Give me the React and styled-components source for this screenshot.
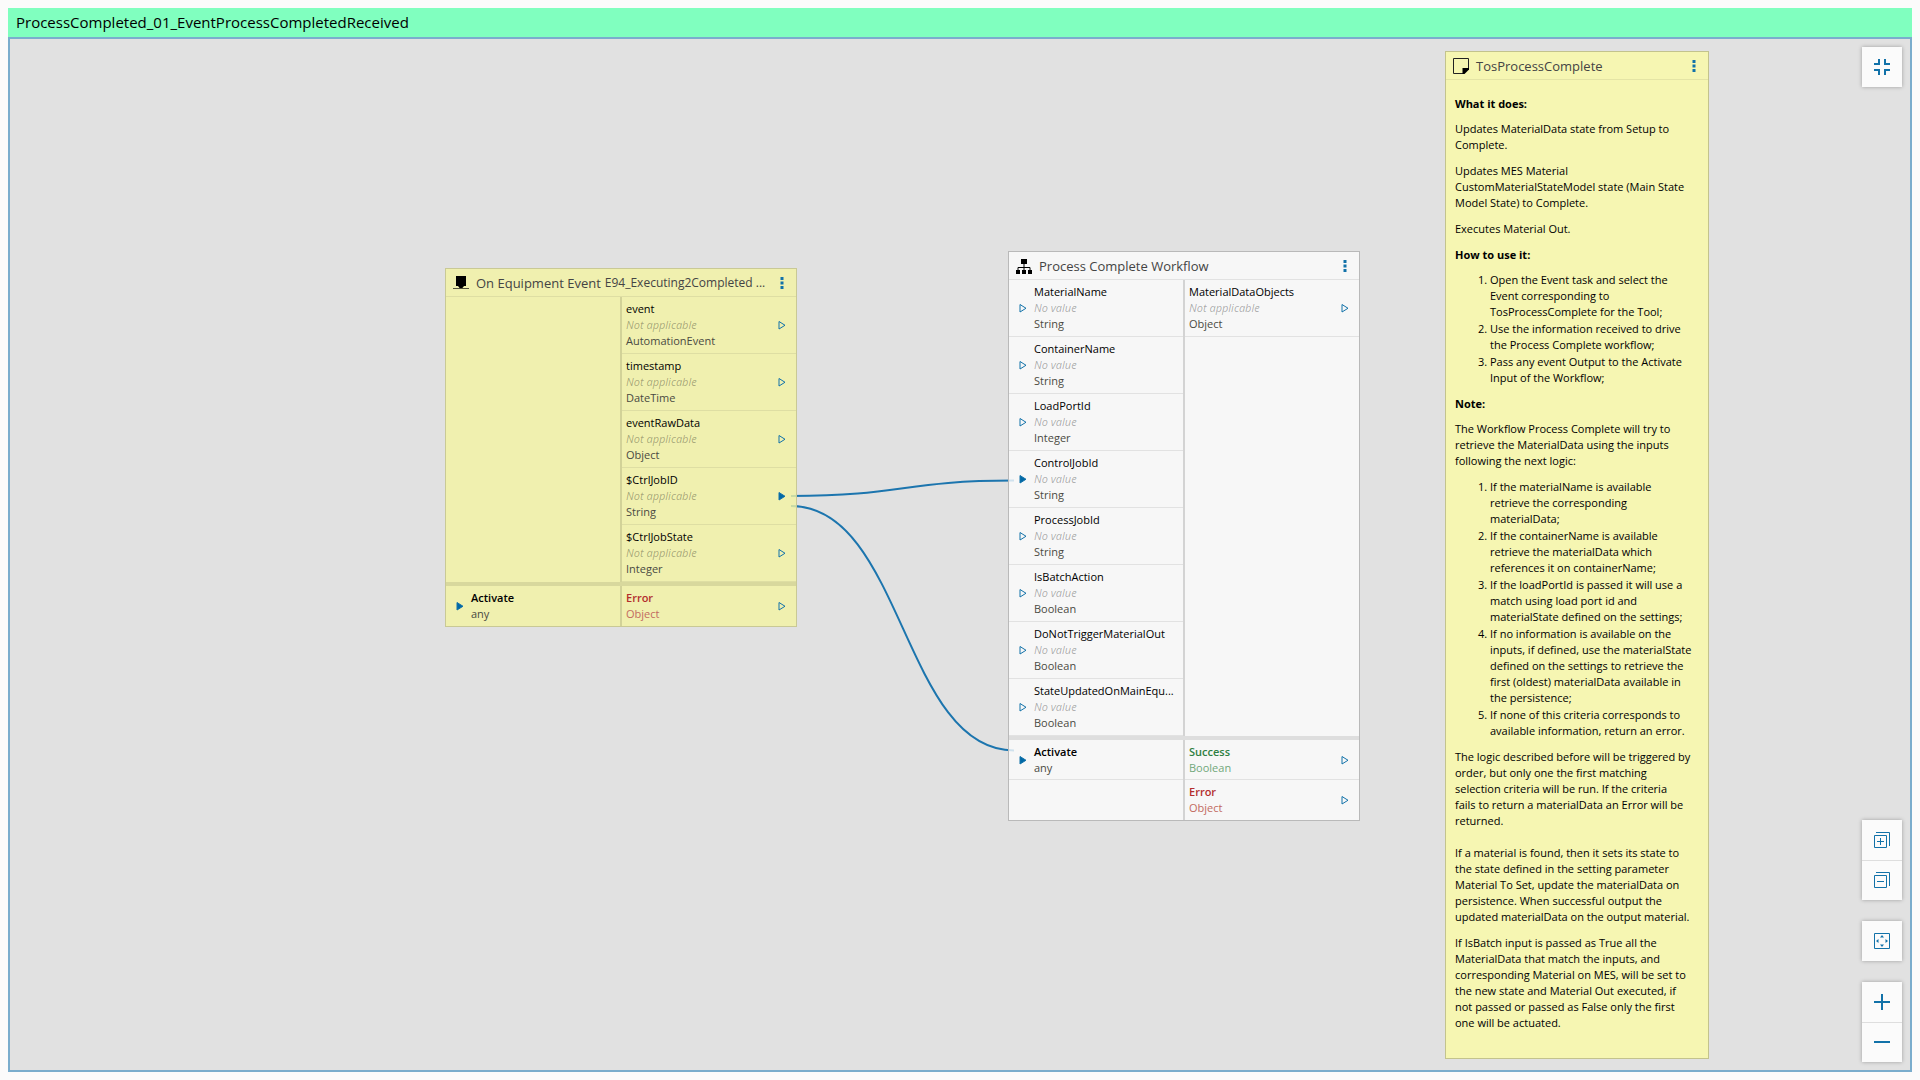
import React from "react";
import styled, { createGlobalStyle, css } from "styled-components";

const GlobalStyle = createGlobalStyle`
  *, *::before, *::after { box-sizing: border-box; }
  body {
    margin: 0;
    background: #fbfbfb;
    color: #000;
    font-family: "Open Sans", "Noto Sans", sans-serif;
    font-size: 11px;
    line-height: 16px;
  }
`;

const Page = styled.main`
  display: flex;
  flex-direction: column;
  min-height: 100vh;
  padding: 8px;
`;

const TitleBar = styled.header`
  height: 29px;
  padding: 0 8px;
  background: #80ffbf;
`;

const Title = styled.h1`
  margin: 0;
  font-size: 15px;
  font-weight: 400;
  line-height: 28px;
`;

const Canvas = styled.section`
  position: relative;
  flex: 1;
  overflow: hidden;
  border: 2px solid #7aadcd;
  background: #e1e1e1;
`;

const Wires = styled.svg`
  position: absolute;
  inset: 0;
  width: 100%;
  height: 100%;
  fill: none;
  stroke: #1c75ae;
  stroke-width: 2;
`;

const themes = {
  event: css`
    --surface: rgba(244, 244, 163, 0.8);
    --edge: #c9c995;
    --line: #dedea3;
    --divider: #d2d298;
    --band: #d8d89d;
  `,
  plain: css`
    --surface: rgba(252, 252, 252, 0.8);
    --edge: #b9b9b9;
    --line: #e2e2e2;
    --divider: #d3d3d3;
    --band: #dedede;
  `,
  note: css`
    --surface: #f6f6b2;
    --edge: #c3c38d;
    --line: #e4e4a5;
  `,
};

const Card = styled.article`
  ${(p) => themes[p.$theme]}
  position: absolute;
  left: ${(p) => p.$x}px;
  top: ${(p) => p.$y}px;
  width: ${(p) => p.$width}px;
  border: 1px solid var(--edge);
  background: var(--surface);
`;

const CardHeader = styled.header`
  display: flex;
  align-items: center;
  height: 28px;
  padding: 0 10px 0 7px;
  border-bottom: 1px solid var(--line);
  color: #444;
  font-size: 12px;
  svg { flex: none; }
`;

const CardTitle = styled.h2`
  margin: 0 4px 0 7px;
  font-size: 13px;
  font-weight: ${(p) => (p.$strong ? 500 : 400)};
  white-space: nowrap;
`;

const CardDetail = styled.span`
  white-space: nowrap;
`;

const MenuButton = styled.button`
  flex: none;
  display: flex;
  margin-left: auto;
  padding: 2px;
  border: 0;
  background: none;
  color: #1272a9;
  cursor: pointer;
`;

const PortGroup = styled.div`
  display: grid;
  grid-template-columns: calc(50% - 1px) 1fr;
  border-top: ${(p) => (p.$banded ? 4 : 0)}px solid var(--band);
`;

const PortColumn = styled.ul`
  min-width: 0;
  margin: 0;
  padding: 0;
  list-style: none;
  & + & { border-left: 2px solid var(--divider); }
`;

const PortRow = styled.li`
  display: flex;
  align-items: center;
  height: ${(p) => (p.$compact ? 40 : 57)}px;
  padding: ${(p) => (p.$output ? "0 10px 0 4px" : "0 0 0 10px")};
  gap: 7px;
  border-bottom: 1px solid var(--line);
  ${PortGroup}:last-child > ${PortColumn} > &:last-child { border-bottom: 0; }
  svg { flex: none; }
`;

const PortText = styled.div`
  flex: 1;
  min-width: 0;
`;

const tones = { error: ["#b32d2d", "#c26a60"], success: ["#2f8043", "#72a87b"] };

const PortName = styled.div`
  color: ${(p) => (p.$tone ? tones[p.$tone][0] : "#000")};
  font-weight: ${(p) => (p.$strong ? 600 : 400)};
  white-space: nowrap;
`;

const PortValue = styled.div`
  color: rgba(0, 0, 0, 0.32);
  font-style: italic;
`;

const PortType = styled.div`
  color: ${(p) => (p.$tone ? tones[p.$tone][1] : "#4a4a42")};
`;

const NoteBody = styled.div`
  padding: 16px 16px 17px 9px;
  h3 {
    margin: 0 0 9px;
    font-size: 11px;
    font-weight: 700;
  }
  p { margin: 0 0 10px; }
  ol { margin: 0 0 10px; padding-left: 35px; }
  li { margin-bottom: 1px; }
`;

const Toolbar = styled.nav`
  position: absolute;
  top: 8px;
  right: 8px;
  bottom: 8px;
  display: flex;
  flex-direction: column;
  gap: 21px;
`;

const ToolGroup = styled.div`
  display: flex;
  flex-direction: column;
  box-shadow: 0 0 4px rgba(0, 0, 0, 0.3);
  &:first-child { margin-bottom: auto; }
`;

const ToolButton = styled.button`
  display: flex;
  align-items: center;
  justify-content: center;
  width: 40px;
  height: 40px;
  padding: 0;
  border: 0;
  background: #fbfbfb;
  color: #1272a9;
  cursor: pointer;
  & + & { box-shadow: inset 0 1px #dedede; }
`;

const EventIcon = () => (
  <svg width="16" height="16" viewBox="0 0 16 16" aria-hidden="true">
    <path d="M3 1h10v10h-2l-2 2.500H7L5 11H3z" fill="#000" />
    <path d="M0 13.500h16" stroke="#55553c" />
  </svg>
);

const WorkflowIcon = () => (
  <svg width="16" height="16" viewBox="0 0 16 16" aria-hidden="true">
    <path d="M5 1h6v5H5zM0 12h4v4H0zM6 12h4v4H6zM12 12h4v4h-4z" fill="#000" />
    <path d="M8 6v6M2 12V9.500h12V12" fill="none" stroke="#000" />
  </svg>
);

const NoteIcon = () => (
  <svg width="16" height="16" viewBox="0 0 16 16" aria-hidden="true">
    <path d="M.5.5h15v10l-5 5H.5z" fill="none" stroke="#222" />
    <path d="M9.500 16v-6H16v1.500L11.500 16z" fill="#000" />
  </svg>
);

const DotsIcon = () => (
  <svg width="4" height="12" viewBox="0 0 4 12" fill="currentColor" aria-hidden="true">
    <path d="M.5 0h3v3h-3zM.5 4.500h3v3h-3zM.5 9h3v3h-3z" />
  </svg>
);

const Arrow = ({ filled }) => (
  <svg width="8" height="10" viewBox="0 0 8 10" aria-hidden="true">
    <path d="M1 1.500v7.500L7 5.250z" fill={filled ? "#0068a6" : "none"} stroke="#1272a9" />
  </svg>
);

const toolIcons = {
  collapse: <path d="M0 5h5V0M11 0v5h5M0 11h5v5M16 11h-5v5" strokeWidth="2" />,
  expandAll: <path d="M.5 3.500h12v12H.5zM2 .5h13.500V14M3 9.500h7M6.500 6v7" />,
  collapseAll: <path d="M.5 3.500h12v12H.5zM2 .5h13.500V14M3 9.500h7" />,
  fit: (
    <>
      <path d="M.5.5h15v15H.5z" />
      <path d="M8 2l2 2.500H6zM8 14l2-2.500H6zM2 8l2.500-2v4zM14 8l-2.500-2v4z" fill="currentColor" stroke="none" />
    </>
  ),
  zoomIn: <path d="M0 8h16M8 0v16" strokeWidth="2" />,
  zoomOut: <path d="M0 8h16" strokeWidth="2" />,
};

const Tool = ({ label, icon }) => (
  <ToolButton type="button" aria-label={label}>
    <svg width="16" height="16" viewBox="0 0 16 16" fill="none" stroke="currentColor" aria-hidden="true">
      {toolIcons[icon]}
    </svg>
  </ToolButton>
);

const Menu = () => (
  <MenuButton type="button" aria-label="Options">
    <DotsIcon />
  </MenuButton>
);

const Port = ({ port, output, compact }) => (
  <PortRow $output={output} $compact={compact}>
    {!output && port.name && <Arrow filled={port.linked} />}
    {port.name && (
      <PortText>
        <PortName $tone={port.tone} $strong={compact}>{port.name}</PortName>
        {!compact && <PortValue>{output ? "Not applicable" : "No value"}</PortValue>}
        <PortType $tone={port.tone}>{port.type}</PortType>
      </PortText>
    )}
    {output && <Arrow filled={port.linked} />}
  </PortRow>
);

const Ports = ({ inputs, outputs, compact }) => (
  <PortGroup $banded={compact}>
    <PortColumn>
      {inputs.map((port, i) => <Port key={i} port={port} compact={compact} />)}
    </PortColumn>
    <PortColumn>
      {outputs.map((port, i) => <Port key={i} port={port} output compact={compact} />)}
    </PortColumn>
  </PortGroup>
);

const eventOutputs = [
  { name: "event", type: "AutomationEvent" },
  { name: "timestamp", type: "DateTime" },
  { name: "eventRawData", type: "Object" },
  { name: "$CtrlJobID", type: "String", linked: true },
  { name: "$CtrlJobState", type: "Integer" },
];

const workflowInputs = [
  { name: "MaterialName", type: "String" },
  { name: "ContainerName", type: "String" },
  { name: "LoadPortId", type: "Integer" },
  { name: "ControlJobId", type: "String", linked: true },
  { name: "ProcessJobId", type: "String" },
  { name: "IsBatchAction", type: "Boolean" },
  { name: "DoNotTriggerMaterialOut", type: "Boolean" },
  { name: "StateUpdatedOnMainEqu...", type: "Boolean" },
];

const activate = { name: "Activate", type: "any", linked: true };
const error = { name: "Error", type: "Object", tone: "error" };
const success = { name: "Success", type: "Boolean", tone: "success" };

export default function App() {
  return (
    <Page>
      <GlobalStyle />
      <TitleBar>
        <Title>ProcessCompleted_01_EventProcessCompletedReceived</Title>
      </TitleBar>
      <Canvas>
        <Wires aria-hidden="true">
          <path d="M781 457C893 457 893 441.500 1004 441.500" />
          <path d="M781 467C893 467 893 711.500 1004 711.500" />
        </Wires>

        <Card $theme="event" $x={435} $y={229} $width={352}>
          <CardHeader>
            <EventIcon />
            <CardTitle $strong>On Equipment Event</CardTitle>
            <CardDetail>E94_Executing2Completed ...</CardDetail>
            <Menu />
          </CardHeader>
          <Ports inputs={[]} outputs={eventOutputs} />
          <Ports inputs={[activate]} outputs={[error]} compact />
        </Card>

        <Card $theme="plain" $x={998} $y={212} $width={352}>
          <CardHeader>
            <WorkflowIcon />
            <CardTitle>Process Complete Workflow</CardTitle>
            <Menu />
          </CardHeader>
          <Ports inputs={workflowInputs} outputs={[{ name: "MaterialDataObjects", type: "Object" }]} />
          <Ports inputs={[activate, {}]} outputs={[success, error]} compact />
        </Card>

        <Card $theme="note" $x={1435} $y={12} $width={264}>
          <CardHeader>
            <NoteIcon />
            <CardTitle>TosProcessComplete</CardTitle>
            <Menu />
          </CardHeader>
          <NoteBody>
            <h3>What it does:</h3>
            <p>Updates MaterialData state from Setup to Complete.</p>
            <p>Updates MES Material CustomMaterialStateModel state (Main State Model State) to Complete.</p>
            <p>Executes Material Out.</p>
            <h3>How to use it:</h3>
            <ol>
              <li>Open the Event task and select the Event corresponding to TosProcessComplete for the Tool;</li>
              <li>Use the information received to drive the Process Complete workflow;</li>
              <li>Pass any event Output to the Activate Input of the Workflow;</li>
            </ol>
            <h3>Note:</h3>
            <p>The Workflow Process Complete will try to retrieve the MaterialData using the inputs following the next logic:</p>
            <ol>
              <li>If the materialName is available retrieve the corresponding materialData;</li>
              <li>If the containerName is available retrieve the materialData which references it on containerName;</li>
              <li>If the loadPortId is passed it will use a match using load port id and materialState defined on the settings;</li>
              <li>If no information is available on the inputs, if defined, use the materialState defined on the settings to retrieve the first (oldest) materialData available in the persistence;</li>
              <li>If none of this criteria corresponds to available information, return an error.</li>
            </ol>
            <p>
              The logic described before will be triggered by order, but only one the first matching selection
              criteria will be run. If the criteria
              <br />
              fails to return a materialData an Error will be returned.
              <br />
              <br />
              If a material is found, then it sets its state to the state defined in the setting parameter Material
              To Set, update the materialData on persistence. When successful output the updated materialData on
              the output material.
            </p>
            <p>
              If IsBatch input is passed as True all the MaterialData that match the inputs, and corresponding
              Material on MES, will be set to the new state and Material Out executed, if not passed or passed as
              False only the first one will be actuated.
            </p>
          </NoteBody>
        </Card>

        <Toolbar aria-label="Canvas tools">
          <ToolGroup>
            <Tool label="Exit full screen" icon="collapse" />
          </ToolGroup>
          <ToolGroup>
            <Tool label="Expand all" icon="expandAll" />
            <Tool label="Collapse all" icon="collapseAll" />
          </ToolGroup>
          <ToolGroup>
            <Tool label="Fit to view" icon="fit" />
          </ToolGroup>
          <ToolGroup>
            <Tool label="Zoom in" icon="zoomIn" />
            <Tool label="Zoom out" icon="zoomOut" />
          </ToolGroup>
        </Toolbar>
      </Canvas>
    </Page>
  );
}
